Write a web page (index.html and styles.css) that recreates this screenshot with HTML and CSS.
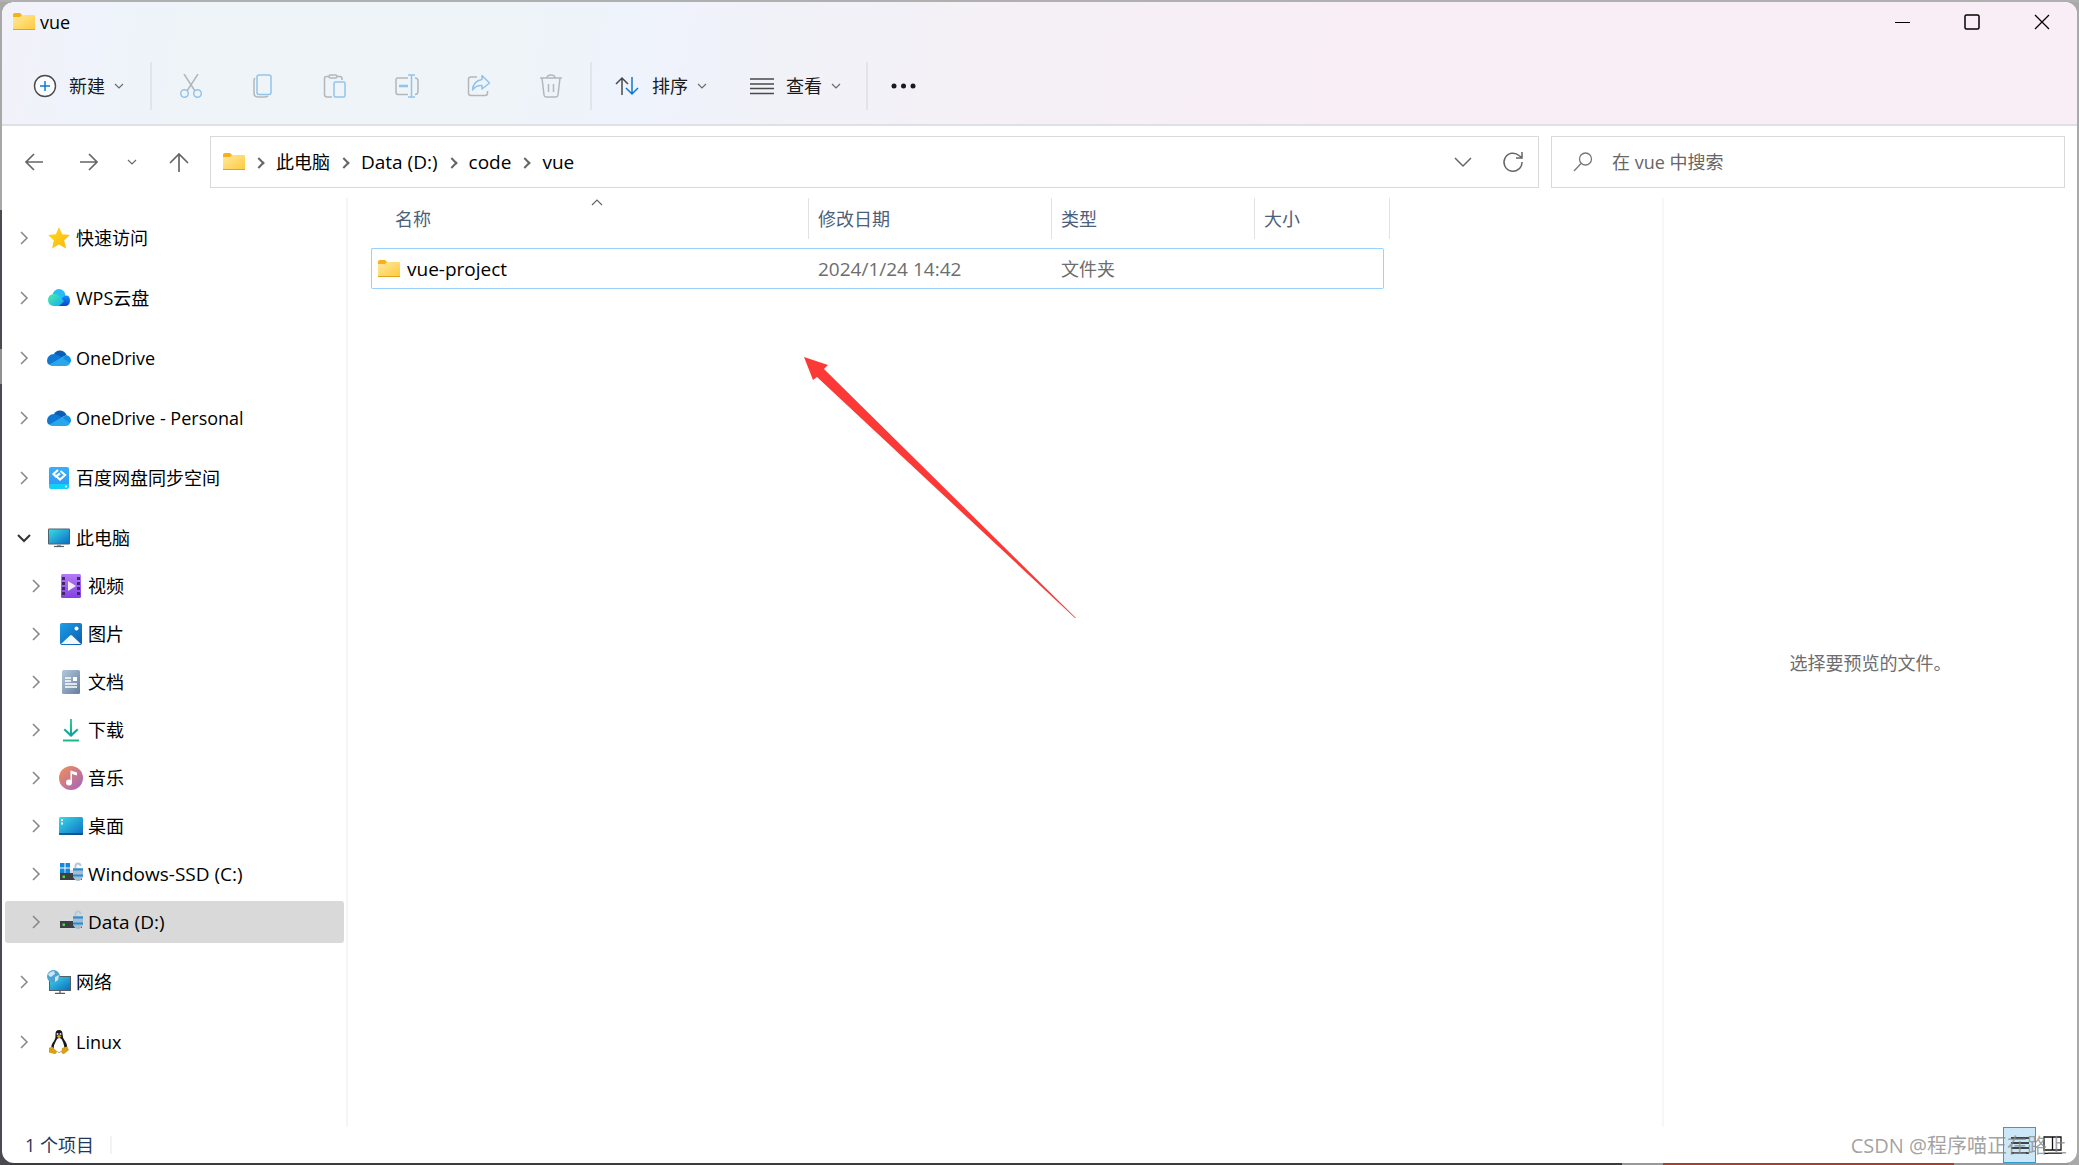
FILE: index.html
```html
<!DOCTYPE html>
<html lang="zh-CN">
<head>
<meta charset="utf-8">
<title>vue</title>
<link rel="stylesheet" href="styles.css">
</head>
<body>
<svg class="defs" aria-hidden="true">
  <defs>
    <linearGradient id="gFolder" x1="0" y1="0" x2="1" y2="1"><stop offset="0" stop-color="#ffe9a0"/><stop offset="1" stop-color="#ffca3a"/></linearGradient>
    <linearGradient id="gStar" x1="0" y1="0" x2="1" y2="1"><stop offset="0" stop-color="#ffdc1f"/><stop offset="1" stop-color="#fbb310"/></linearGradient>
    <linearGradient id="gWpsL" x1="0" y1="0" x2="1" y2="1"><stop offset="0" stop-color="#4af0a8"/><stop offset="1" stop-color="#12a8f5"/></linearGradient>
    <linearGradient id="gWpsR" x1="0" y1="0" x2="0" y2="1"><stop offset="0" stop-color="#1293f5"/><stop offset="1" stop-color="#0b45d0"/></linearGradient>
    <linearGradient id="gScreen" x1="0" y1="0" x2="1" y2="1"><stop offset="0" stop-color="#38dbe6"/><stop offset="1" stop-color="#0d6dc4"/></linearGradient>
    <linearGradient id="gBaidu" x1="0" y1="0" x2="0" y2="1"><stop offset="0" stop-color="#35b0fb"/><stop offset="1" stop-color="#2f97f7"/></linearGradient>
    <linearGradient id="gVideo" x1="0" y1="0" x2="0" y2="1"><stop offset="0" stop-color="#b57bf5"/><stop offset="1" stop-color="#8540e6"/></linearGradient>
    <linearGradient id="gPic" x1="0" y1="0" x2="1" y2="1"><stop offset="0" stop-color="#1c9fe8"/><stop offset="1" stop-color="#0a5cb0"/></linearGradient>
    <linearGradient id="gDoc" x1="0" y1="0" x2="1" y2="1"><stop offset="0" stop-color="#b4c9dd"/><stop offset="1" stop-color="#637e9e"/></linearGradient>
    <linearGradient id="gDown" x1="0" y1="0" x2="0" y2="1"><stop offset="0" stop-color="#2fd08f"/><stop offset="1" stop-color="#0c9ba5"/></linearGradient>
    <linearGradient id="gMusic" x1="0" y1="0" x2="1" y2="1"><stop offset="0" stop-color="#f59053"/><stop offset="1" stop-color="#9f63c4"/></linearGradient>
    <symbol id="folder" viewBox="0 0 22 18"><path d="M0 2Q0 0 2 0H7L9 2V6H0Z" fill="#f7b018"/><path d="M0 4H7L9 2H21Q22 2 22 3V17H0Z" fill="url(#gFolder)"/><path d="M0 16.500H22" stroke="#e3a21d"/></symbol>
    <symbol id="more" viewBox="0 0 10 14"><path d="M2 1L8 7L2 13" fill="none" stroke="#8a8a8a" stroke-width="1.600"/></symbol>
    <symbol id="less" viewBox="0 0 14 10"><path d="M1 2L7 8L13 2" fill="none" stroke="#333" stroke-width="2"/></symbol>
    <symbol id="drop" viewBox="0 0 10 6"><path d="M1 1L5 5L9 1" fill="none" stroke="#6b6b6b" stroke-width="1.200"/></symbol>
    <symbol id="cloud" viewBox="0 0 24 16"><path d="M7 4Q9 0 13.500 0.500Q18 1 19.500 5L12 9Z" fill="#0a5fb4"/><path d="M0 10.500Q0.500 4.500 7 4Q9.500 4 11.500 5.500L16 8L5 15.500Q0 15 0 10.500Z" fill="#0f78d4"/><path d="M15 8L19 5Q24 6 24 10.500Q24 13 21 14Z" fill="#1590df"/><path d="M2.500 14.500L14.500 7.500L23 13Q22 16 18.500 16H6Q4 16 2.500 14.500Z" fill="#28a8ea"/></symbol>
    <symbol id="drive" viewBox="0 0 24 20"><path d="M5 8H18L21 12H1Z" fill="#d9dcdf"/><rect x="1" y="11" width="22" height="7" fill="#3c4043"/><rect x="3.500" y="13.500" width="2.500" height="2.500" fill="#3be33b"/><path d="M16.500 7V4Q16.500 1.500 19 1.500Q21.500 1.500 21.500 4" fill="none" stroke="#b9c8d6" stroke-width="2"/><path d="M14 6H24V15Q22 19 19 19Q16 19 14 15Z" fill="#a9bccd"/><path d="M14 7.500H24M14 13.500H24" stroke="#1f8fe0" stroke-width="2"/></symbol>
  </defs>
</svg>

<main class="window">
  <header class="chrome">
    <div class="titlebar">
      <svg class="ic-folder"><use href="#folder"/></svg>
      <h1 class="title">vue</h1>
      <button class="caption" aria-label="最小化"><svg width="16" height="16" viewBox="0 0 16 16"><path d="M1 8.500H16" stroke="#000"/></svg></button>
      <button class="caption" aria-label="最大化"><svg width="16" height="16" viewBox="0 0 16 16"><rect x="1" y="1" width="14" height="14" rx="1.500" fill="none" stroke="#000" stroke-width="1.500"/></svg></button>
      <button class="caption" aria-label="关闭"><svg width="16" height="16" viewBox="0 0 16 16"><path d="M1 1L15 15M15 1L1 15" stroke="#000" stroke-width="1.300"/></svg></button>
    </div>
    <div class="toolbar">
      <button class="cmd cmd-new"><svg width="24" height="24" viewBox="0 0 24 24"><circle cx="12" cy="12" r="10.500" fill="#fafcff" stroke="#4a4a4a" stroke-width="1.400"/><path d="M12 7V17M7 12H17" stroke="#0f7ad0" stroke-width="1.500"/></svg>新建<svg class="ic-drop"><use href="#drop"/></svg></button>
      <span class="sep"></span>
      <div class="tools">
        <button class="tool" aria-label="剪切" disabled><svg width="24" height="24" viewBox="0 0 24 24" fill="none" stroke-width="1.500"><path d="M5 0L16 17M19 0L8 17" stroke="#b4b7ba"/><circle cx="5.500" cy="19.500" r="3.800" stroke="#92c4ea"/><circle cx="18.500" cy="19.500" r="3.800" stroke="#92c4ea"/></svg></button>
        <button class="tool" aria-label="复制" disabled><svg width="24" height="24" viewBox="0 0 24 24" fill="none" stroke-width="1.500"><path d="M4 4Q3 5 3 7V19Q3 23 7 23H13Q16 23 17 22" stroke="#b4b7ba"/><rect x="6" y="1" width="14" height="19.500" rx="2" stroke="#92c4ea"/></svg></button>
        <button class="tool" aria-label="粘贴" disabled><svg width="24" height="24" viewBox="0 0 24 24" fill="none" stroke-width="1.500"><path d="M9 23H4Q1.500 23 1.500 20.500V4.500Q1.500 2.500 3.500 2.500H6M14 2.500H17Q19 2.500 19 5V6" stroke="#b4b7ba"/><rect x="6" y="1" width="8" height="3" rx="1.500" stroke="#b4b7ba"/><rect x="11" y="8" width="11" height="15" rx="1.500" stroke="#92c4ea"/></svg></button>
        <button class="tool" aria-label="重命名" disabled><svg width="24" height="24" viewBox="0 0 24 24" fill="none" stroke-width="1.500"><path d="M13 4H3Q1 4 1 6V18Q1 20.500 3 20.500H13M20 4Q23 4 23 7V17Q23 20.500 20 20.500" stroke="#b4b7ba"/><path d="M4 12H13" stroke="#92c4ea" stroke-width="2.500"/><path d="M16.500 1V23M13 1H20M13 23H20" stroke="#92c4ea"/></svg></button>
        <button class="tool" aria-label="共享" disabled><svg width="24" height="24" viewBox="0 0 24 24" fill="none" stroke-width="1.500" stroke-linejoin="round"><path d="M10 3H4Q1.500 3 1.500 5.500V19Q1.500 21.500 4 21.500H18Q20.500 21.500 20.500 19V17" stroke="#b4b7ba"/><path d="M15 1.500L22.500 9L15 15V11.500Q9 11 5.500 16Q6 7 15 5.500Z" stroke="#92c4ea"/></svg></button>
        <button class="tool" aria-label="删除" disabled><svg width="24" height="24" viewBox="0 0 24 24" fill="none" stroke="#b4b7ba" stroke-width="1.500"><path d="M1 4H23M8 4Q8 1 12 1Q16 1 16 4M3 4L5 21Q5.300 23 7 23H17Q18.700 23 19 21L21 4M9.500 10V18M14.500 10V18"/></svg></button>
      </div>
      <span class="sep"></span>
      <button class="cmd cmd-sort"><svg width="26" height="24" viewBox="0 0 26 24" fill="none" stroke-width="1.500"><path d="M8 21V4M2 10L8 4L14 10" stroke="#4a4a4a"/><path d="M18 3V20M12 14L18 20L24 14" stroke="#0f7ad0"/></svg>排序<svg class="ic-drop"><use href="#drop"/></svg></button>
      <button class="cmd cmd-view"><svg width="24" height="24" viewBox="0 0 24 24"><path d="M0 5H24M0 10H24M0 14.500H24M0 19.500H24" stroke="#4a4a4a" stroke-width="1.400"/></svg>查看<svg class="ic-drop"><use href="#drop"/></svg></button>
      <span class="sep"></span>
      <button class="cmd cmd-more" aria-label="更多"><svg width="26" height="24" viewBox="0 0 26 24"><circle cx="3" cy="12" r="2.500" fill="#1a1a1a"/><circle cx="12.500" cy="12" r="2.500" fill="#1a1a1a"/><circle cx="22" cy="12" r="2.500" fill="#1a1a1a"/></svg></button>
    </div>
  </header>

  <nav class="navbar" aria-label="导航">
    <button class="nav nav-back" aria-label="后退"><svg width="20" height="20" viewBox="0 0 20 20"><path d="M19 10H2M10 2L2 10L10 18" fill="none" stroke="#666" stroke-width="1.700"/></svg></button>
    <button class="nav nav-fwd" aria-label="前进"><svg width="20" height="20" viewBox="0 0 20 20"><path d="M1 10H18M10 2L18 10L10 18" fill="none" stroke="#666" stroke-width="1.700"/></svg></button>
    <button class="nav nav-recent" aria-label="最近浏览"><svg width="10" height="6"><use href="#drop"/></svg></button>
    <button class="nav nav-up" aria-label="向上"><svg width="20" height="20" viewBox="0 0 20 20"><path d="M10 20V2M1 11L10 2L19 11" fill="none" stroke="#666" stroke-width="1.700"/></svg></button>
    <div class="address">
      <svg class="ic-folder"><use href="#folder"/></svg>
      <ol class="crumbs">
        <li><a href="#">此电脑</a></li>
        <li><a href="#" class="latin">Data (D:)</a></li>
        <li><a href="#" class="latin">code</a></li>
        <li><a href="#" class="latin">vue</a></li>
      </ol>
      <button class="addr-btn" aria-label="历史记录"><svg width="18" height="11" viewBox="0 0 18 11"><path d="M1 1L9 9L17 1" fill="none" stroke="#666" stroke-width="1.500"/></svg></button>
      <button class="addr-btn" aria-label="刷新"><svg width="22" height="22" viewBox="0 0 22 22"><path d="M20 11A9 9 0 1 1 17 4.500L19.500 6.500M20 1V7H14" fill="none" stroke="#666" stroke-width="1.500"/></svg></button>
    </div>
    <label class="search">
      <svg width="20" height="20" viewBox="0 0 20 20"><circle cx="12.500" cy="7" r="6" fill="none" stroke="#777" stroke-width="1.300"/><path d="M8 11.500L1 19" stroke="#777" stroke-width="1.300"/></svg>
      <input type="search" aria-label="搜索" placeholder="在 vue 中搜索">
    </label>
  </nav>

  <div class="body">
    <aside class="sidebar">
      <ul class="tree">
        <li><a href="#" class="node"><svg class="tw"><use href="#more"/></svg><svg class="ico" viewBox="0 0 24 24"><path d="M12 1L15.200 8.200L23 9L17.200 14.300L19 22.500L12 18.500L5 22.500L6.800 14.300L1 9L8.800 8.200Z" fill="url(#gStar)"/></svg>快速访问</a></li>
        <li><a href="#" class="node"><svg class="tw"><use href="#more"/></svg><svg class="ico" viewBox="0 0 24 24"><circle cx="12" cy="9.500" r="6.500" fill="#25bdf8"/><path d="M9 20L16 11Q22 7 23 14Q23 20 18 20Z" fill="url(#gWpsR)"/><path d="M7 20Q1 19.500 1 14Q1 8.500 7 8Q11 8 13 11L17 15Q13 20 11 20Z" fill="url(#gWpsL)"/></svg>WPS云盘</a></li>
        <li><a href="#" class="node"><svg class="tw"><use href="#more"/></svg><svg class="ico ico-cloud"><use href="#cloud"/></svg>OneDrive</a></li>
        <li><a href="#" class="node"><svg class="tw"><use href="#more"/></svg><svg class="ico ico-cloud"><use href="#cloud"/></svg>OneDrive - Personal</a></li>
        <li><a href="#" class="node"><svg class="tw"><use href="#more"/></svg><svg class="ico" viewBox="0 0 24 24"><rect x="2" y="1" width="20" height="20" rx="2" fill="url(#gBaidu)"/><path d="M2 18H22V21Q22 23 20 23H4Q2 23 2 21Z" fill="#12d0f8"/><circle cx="19" cy="20.500" r="1" fill="#fff"/><path d="M11 4L6.500 8L9 10.500L13 7.500M13.500 5L18 9L13 13.500L10 11" fill="none" stroke="#fff" stroke-width="2.200"/></svg>百度网盘同步空间</a></li>
        <li>
          <a href="#" class="node"><svg class="tw"><use href="#less"/></svg><svg class="ico" viewBox="0 0 24 24"><rect x="1" y="2.500" width="22" height="16" rx="1" fill="#52606c"/><rect x="2" y="3.500" width="20" height="14" fill="url(#gScreen)"/><path d="M10 18.500H14V20H10Z" fill="#9aa3aa"/><path d="M7 20.500H17" stroke="#52606c" stroke-width="1.200"/></svg>此电脑</a>
          <ul class="branch">
            <li><a href="#" class="node"><svg class="tw"><use href="#more"/></svg><svg class="ico" viewBox="0 0 24 24"><rect x="2" width="20" height="24" rx="1.500" fill="url(#gVideo)"/><path d="M4.500 3V22M19.500 3V22" stroke="#41256e" stroke-width="3" stroke-dasharray="3 2"/><path d="M9 7L17 12L9 17Z" fill="#f2ecfb"/></svg>视频</a></li>
            <li><a href="#" class="node"><svg class="tw"><use href="#more"/></svg><svg class="ico" viewBox="0 0 24 24"><rect x="1" y="1" width="22" height="22" rx="2" fill="url(#gPic)"/><circle cx="17.500" cy="6.500" r="2" fill="#fff"/><path d="M2 22L11 13.500Q12 12.500 13 13.500L22 22Z" fill="#f2f8fd"/></svg>图片</a></li>
            <li><a href="#" class="node"><svg class="tw"><use href="#more"/></svg><svg class="ico" viewBox="0 0 24 24"><rect x="3" width="18" height="24" rx="1.500" fill="url(#gDoc)"/><path d="M6 8H12M6 11H12M6 14H18M6 17H18" stroke="#fff" stroke-width="1.300"/><rect x="14" y="7" width="4" height="4" fill="#fff"/></svg>文档</a></li>
            <li><a href="#" class="node"><svg class="tw"><use href="#more"/></svg><svg class="ico" viewBox="0 0 24 24"><path d="M11 1H13V15L18 10.500L19.500 12L12 19L4.500 12L6 10.500L11 15Z" fill="url(#gDown)"/><path d="M4 22.500H20" stroke="#1fb68e" stroke-width="2"/></svg>下载</a></li>
            <li><a href="#" class="node"><svg class="tw"><use href="#more"/></svg><svg class="ico" viewBox="0 0 24 24"><circle cx="12" cy="12" r="12" fill="url(#gMusic)"/><circle cx="10" cy="16.500" r="3" fill="#fff"/><path d="M11.500 16V4.500L18 6.500V9.500L13 8V16.500Z" fill="#fff"/></svg>音乐</a></li>
            <li><a href="#" class="node"><svg class="tw"><use href="#more"/></svg><svg class="ico" viewBox="0 0 24 24"><rect y="3" width="24" height="18" rx="1.500" fill="url(#gScreen)"/><path d="M0 20H24" stroke="#10477c" stroke-width="1.500"/><path d="M2 6H4M2 9.500H4" stroke="#fff" stroke-width="2"/></svg>桌面</a></li>
            <li><a href="#" class="node latin"><svg class="tw"><use href="#more"/></svg><svg class="ico" viewBox="0 0 24 24"><use href="#drive" width="24" height="20"/><path d="M1 1H5.500V5.500H1ZM6.500 1H11V5.500H6.500ZM1 6.500H5.500V11H1ZM6.500 6.500H11V11H6.500Z" fill="#1688dc"/></svg>Windows-SSD (C:)</a></li>
            <li><a href="#" class="node latin selected" aria-current="true"><svg class="tw"><use href="#more"/></svg><svg class="ico" viewBox="0 0 24 24"><use href="#drive" width="24" height="20"/></svg>Data (D:)</a></li>
          </ul>
        </li>
        <li><a href="#" class="node"><svg class="tw"><use href="#more"/></svg><svg class="ico" viewBox="0 0 24 24"><rect x="2" y="6" width="22" height="15" fill="#52606c"/><rect x="3" y="7" width="20" height="13" fill="url(#gScreen)"/><path d="M8 23.500H18M13 21V23" stroke="#52606c" stroke-width="1.300"/><circle cx="6.500" cy="6.500" r="6.500" fill="#4ba3d3"/><path d="M1 4Q4 1 7 1L8 4L4 7L2 6ZM8 7L12 5L11 10L8 12Z" fill="#c9e6f4"/></svg>网络</a></li>
        <li><a href="#" class="node"><svg class="tw"><use href="#more"/></svg><svg class="ico" viewBox="0 0 24 24"><path d="M12 0Q15.500 0 15.500 4Q15.500 8 18 11Q21 15 20 20L12 22.500L4 20Q4 14 7 11Q9 8 8.500 4Q8.500 0 12 0Z" fill="#16181a"/><path d="M12 8Q14.500 8 15.500 11Q18 16 17 20Q15 22 12 22Q8 22 6.500 19Q7 14 9 11Q10 8 12 8Z" fill="#fff"/><circle cx="10.500" cy="4" r="1" fill="#ddd"/><circle cx="13.500" cy="4" r="1" fill="#ddd"/><path d="M9.500 6L12 5L14.500 6L12 8.500Z" fill="#e8a912"/><path d="M2 18L5 16.500L10 21.500Q9.500 24 7.500 24L2 22.500ZM15 18L20 16.500L22 20L17 24Q14 24 14.500 21Z" fill="#d9a012"/></svg>Linux</a></li>
      </ul>
    </aside>

    <section class="files">
      <table class="list">
        <colgroup><col class="c-name"><col class="c-date"><col class="c-type"><col class="c-size"></colgroup>
        <thead>
          <tr>
            <th scope="col" aria-sort="ascending">名称<svg class="sort" width="12" height="7" viewBox="0 0 12 7"><path d="M1 6L6 1L11 6" fill="none" stroke="#666" stroke-width="1.200"/></svg></th>
            <th scope="col">修改日期</th>
            <th scope="col">类型</th>
            <th scope="col">大小</th>
          </tr>
        </thead>
        <tbody>
          <tr>
            <td><div class="cell cell-first"><svg class="ic-folder"><use href="#folder"/></svg><span class="latin">vue-project</span></div></td>
            <td><div class="cell latin">2024/1/24 14:42</div></td>
            <td><div class="cell">文件夹</div></td>
            <td><div class="cell cell-last"></div></td>
          </tr>
        </tbody>
      </table>
      <svg class="arrow" width="274" height="264" viewBox="0 0 274 264" aria-hidden="true"><path d="M0 0L24 8L20 12L272 261L271 261L13 20L9 23Z" fill="#fb3a38"/></svg>
    </section>

    <section class="preview"><p>选择要预览的文件。</p></section>
  </div>

  <footer class="status">
    <span class="count">1 个项目</span>
    <button class="view view-on" aria-label="详细信息"><svg width="18" height="18" viewBox="0 0 18 18"><path d="M0 2H18M0 7H18M0 12H18M0 17H18" stroke="#111" stroke-width="1.400"/></svg></button>
    <button class="view" aria-label="大图标"><svg width="20" height="18" viewBox="0 0 20 18"><path d="M1 1H18V14H1ZM9.500 1V14M1 17.500H19" fill="none" stroke="#111" stroke-width="1.300"/></svg></button>
    <span class="credit">CSDN @程序喵正在路上</span>
  </footer>
</main>
</body>
</html>
```

FILE: styles.css
```css
* { box-sizing: border-box; }

body {
  margin: 0;
  height: 100vh;
  padding: 2px;
  background:
    linear-gradient(#b0b0b0, #b0b0b0) 0 0 / 100% 2px no-repeat,
    linear-gradient(#a8a8a8 0 18%, #4a4a50 18% 30%, #909090 30% 33%, #4a4a50 33%) 0 0 / 10px 100% no-repeat,
    linear-gradient(#a9a9a9, #a9a9a9) 100% 0 / 10px 100% no-repeat,
    linear-gradient(90deg, #3c3c3e 0 78%, #999 78% 80%, #a3402f 80% 94%, #999 94%);
  font: 18px/24px "Open Sans", "Noto Sans CJK SC", sans-serif;
  color: #000;
}

.defs { position: absolute; width: 0; height: 0; }

button {
  margin: 0;
  padding: 0;
  border: 0;
  background: none;
  font: inherit;
  color: inherit;
  display: flex;
  align-items: center;
}

a { color: inherit; text-decoration: none; }
ul, ol { list-style: none; margin: 0; padding: 0; }
svg { flex: none; display: block; }

.latin { font-size: 19px; }
.ic-folder { width: 22px; height: 18px; }
.ic-drop { width: 10px; height: 6px; }

.window {
  height: 100%;
  display: flex;
  flex-direction: column;
  background: #fff;
  border-radius: 12px;
  overflow: hidden;
}

/* Title bar and commands */
.chrome {
  border-bottom: 2px solid #dfdfe7;
  background: linear-gradient(100deg, #f2f2f9, #eff3fb 5%, #eef4f8 10% 24%, #eff3fc 31%, #f1f2f8 38%, #f5f0f6 50%, #f9eef6 64%);
}
.titlebar { display: flex; align-items: center; height: 40px; padding-left: 11px; }
.title { flex: 1; margin: 0 0 0 5px; font-size: 18px; font-weight: inherit; }
.caption { width: 70px; height: 40px; justify-content: center; }

.toolbar { display: flex; align-items: center; height: 82px; padding: 6px 0 0 31px; color: #1a1a1a; }
.cmd { gap: 12px; height: 48px; }
.cmd .ic-drop { margin-left: -3px; }
.cmd-new { width: 117px; }
.cmd-sort { margin-left: 22px; width: 136px; }
.cmd-view { width: 116px; }
.cmd-more { margin-left: 23px; }
.sep { width: 2px; height: 48px; background: #e1e4ea; }
.tools { display: flex; padding: 0 3px; }
.tool { width: 72px; height: 48px; justify-content: center; }

/* Address row */
.navbar { display: flex; align-items: center; padding: 10px 12px 10px 22px; height: 72px; }
.nav { height: 40px; justify-content: center; }
.nav-back { width: 20px; }
.nav-fwd { width: 20px; margin-left: 35px; }
.nav-recent { width: 10px; margin-left: 28px; }
.nav-up { width: 20px; margin: 0 21px 0 32px; }

.address {
  flex: 1;
  display: flex;
  align-items: center;
  height: 52px;
  padding: 0 14px 0 12px;
  border: 1px solid #d9d9d9;
}
.crumbs { flex: 1; display: flex; }
.crumbs li { display: flex; align-items: center; }
.crumbs li::before {
  content: "";
  width: 6px;
  height: 6px;
  margin: 2px 13px 0 10px;
  border: solid #666;
  border-width: 2px 2px 0 0;
  transform: rotate(45deg);
}
.addr-btn { width: 22px; margin-left: 28px; justify-content: center; }

.search {
  width: 514px;
  display: flex;
  align-items: center;
  height: 52px;
  margin-left: 12px;
  padding: 0 21px;
  border: 1px solid #d9d9d9;
}
.search input {
  flex: 1;
  min-width: 0;
  margin-left: 19px;
  padding: 0;
  border: 0;
  outline: 0;
  background: none;
  font: inherit;
}
.search input::placeholder { color: #666; opacity: 1; }

/* Three panes */
.body { flex: 1; display: flex; min-height: 0; }

.sidebar { width: 346px; padding: 16px 2px 0 3px; border-right: 2px solid #f5f5f5; }
.tree { display: flex; flex-direction: column; gap: 12px; }
.tree li { display: flow-root; }
.node {
  display: flex;
  align-items: center;
  height: 42px;
  margin: 3px 0;
  padding-left: 12px;
  border-radius: 3px;
}
.branch .node { padding-left: 24px; }
.tw { width: 14px; height: 14px; margin-right: 16px; }
.ico { width: 24px; height: 24px; margin-right: 5px; }
.ico-cloud { height: 16px; }
.selected { background: #d9d9d9; }

.files { position: relative; flex: 1; padding-left: 23px; }
.list { table-layout: fixed; width: 1019px; border-collapse: separate; border-spacing: 0; }
.c-name { width: 438px; }
.c-date { width: 243px; }
.c-type { width: 203px; }
.c-size { width: 135px; }
.list th {
  position: relative;
  height: 41px;
  padding: 0 0 0 9px;
  border-right: 1px solid #e2e2e2;
  font-weight: inherit;
  text-align: left;
  color: #4c607a;
}
.list th:first-child { padding-left: 24px; }
.sort { position: absolute; left: 220px; top: 1px; }
.list td { padding: 9px 0 0; color: #6d6d6d; }
.cell {
  display: flex;
  align-items: center;
  height: 41px;
  padding-left: 9px;
  border: solid #99d1ff;
  border-width: 1px 0;
}
.cell-first { gap: 7px; padding-left: 6px; border-left-width: 1px; border-radius: 2px 0 0 2px; color: #000; }
.cell-last { margin-right: 6px; border-right-width: 1px; border-radius: 0 2px 2px 0; }
.arrow { position: absolute; left: 456px; top: 159px; }

.preview {
  width: 415px;
  display: flex;
  align-items: center;
  justify-content: center;
  border-left: 2px solid #f7f7f7;
  color: #6d6d6d;
}
.preview p { margin: 0; }

/* Status bar */
.status { position: relative; display: flex; align-items: center; height: 36px; padding: 0 8px 0 23px; }
.count { padding-right: 16px; margin-right: auto; line-height: 18px; border-right: 2px solid #f3f3f3; color: #1e395b; }
.view { width: 33px; height: 36px; justify-content: center; }
.view-on { background: #cce8f8; border: 1px solid #2f9cd4; }
.credit { position: absolute; right: 10px; top: 7px; font-size: 20px; color: #8a8a8acc; }
```
